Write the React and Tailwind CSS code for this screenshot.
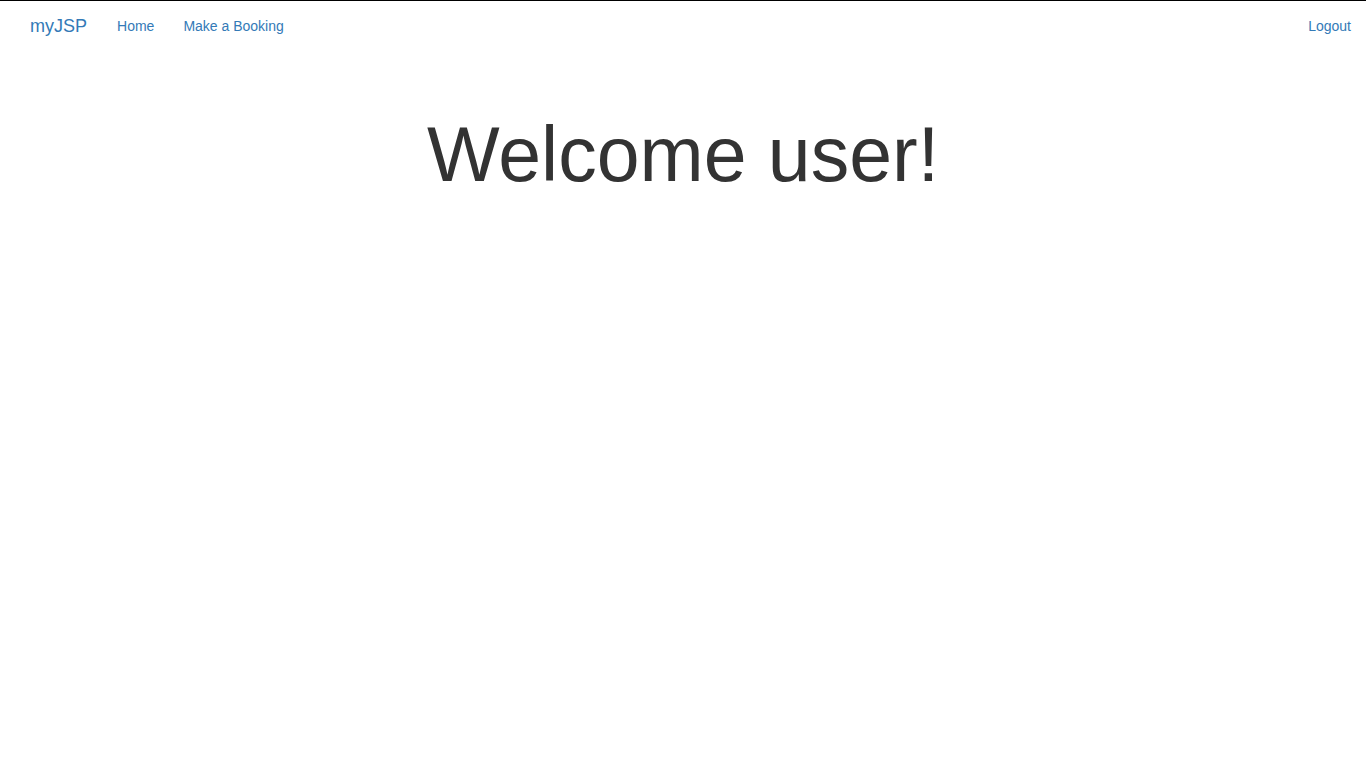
export default function App() {
  return (
    <div className="min-h-screen bg-white text-[#333] font-['Liberation_Sans',Arial,sans-serif] text-[14px] leading-[20px]">
      <nav className="border-t border-black h-[50px] flex items-stretch justify-between px-[15px]">
        <div className="flex items-stretch">
          <a className="px-[15px] py-[15px] text-[18px] leading-[20px] text-[#337ab7] h-[50px]">myJSP</a>
          <a className="px-[15px] py-[15px] text-[#337ab7]">Home</a>
          <a className="pl-[14px] pr-[15px] py-[15px] text-[#337ab7]">Make a Booking</a>
        </div>
        <div className="flex items-stretch -mr-[15px]">
          <a className="px-[15px] py-[15px] text-[#337ab7]">Logout</a>
        </div>
      </nav>
      <h1 className="text-center text-[77px] leading-[85px] font-normal mt-[62px]">Welcome user!</h1>
    </div>
  );
}
